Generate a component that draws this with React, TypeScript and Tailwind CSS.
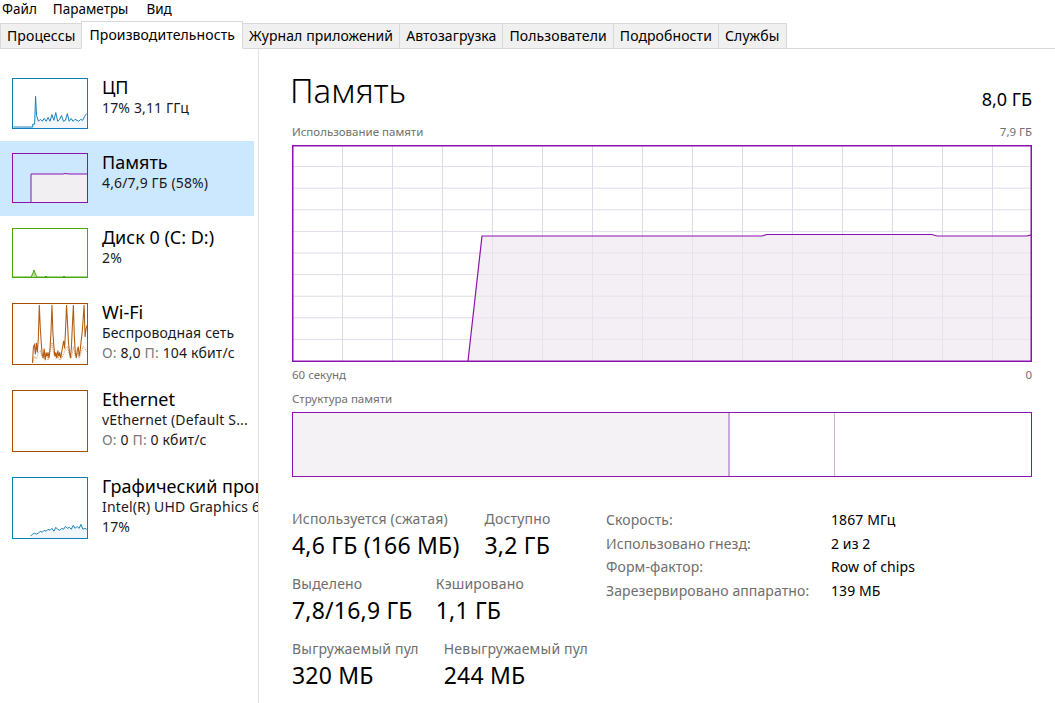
import React from "react";

const F = "font-['Noto_Sans',sans-serif]";

function CpuThumb() {
  const pts = [
    [0, 50], [20, 50], [20, 47], [22, 47], [23, 18], [24, 38], [26, 44], [28, 42], [30, 44], [32, 41], [34, 44], [36, 40], [38, 44], [40, 37], [42, 43], [44, 35], [46, 44], [48, 42], [50, 38], [52, 44], [54, 43], [56, 36], [58, 44], [60, 41], [62, 44], [64, 42], [66, 43], [68, 44], [70, 42], [72, 43], [74, 39], [76, 36],
  ];
  const line = pts.map((p) => p.join(",")).join(" ");
  return (
    <svg width="76" height="51" className="block border border-[#117dbb]" viewBox="0 0 76 51">
      <polygon points={line + " 76,51 20,51"} fill="#f1f6fa" />
      <polyline points={line} fill="none" stroke="#117dbb" strokeWidth="1" />
    </svg>
  );
}

function MemThumb() {
  return (
    <svg width="76" height="50" className="block border border-[#8b12ae]" viewBox="0 0 74 48">
      <polygon points="18,48 18,20 50,20 52,19.5 56,20 74,20 74,48" fill="#f1eff2" />
      <polyline points="18,48 18,20 50,20 52,19.5 56,20 74,20" fill="none" stroke="#8b12ae" strokeWidth="1" />
    </svg>
  );
}

function DiskThumb() {
  return (
    <svg width="76" height="50" className="block border border-[#4da60c]" viewBox="0 0 74 48">
      <polygon points="18,48 20,44 21,41 22,44 24,48" fill="#b7de9a" />
      <polyline points="0,48 18,48 20,44 21,41 22,44 24,48 32,48 33,47 34,48 50,48 51,47 52,48 74,48" fill="none" stroke="#4da60c" strokeWidth="1" />
    </svg>
  );
}

function WifiThumb() {
  const a =
    "20,61 21,44 22,42 23,52 24,40 25,50 26,36 27,1 28,24 29,40 30,52 31,56 32,46 33,58 34,50 35,54 36,50 37,56 38,46 39,30 40,1 41,30 42,44 43,54 44,50 45,56 46,48 47,54 48,50 49,56 50,50 51,44 52,38 53,46 54,26 55,1 56,20 57,40 58,50 59,56 60,44 61,22 62,1 63,34 64,50 65,56 66,48 67,44 68,54 69,48 70,38 71,30 72,16 73,1 74,34 75,26 76,22";
  const b =
    "20,61 22,54 24,57 26,50 28,48 30,55 32,56 34,52 36,58 38,50 40,40 42,52 44,56 46,54 48,58 50,56 52,52 54,46 56,44 58,52 60,56 62,44 64,54 66,50 68,56 70,50 72,44 74,46 76,50";
  return (
    <svg width="76" height="62" className="block border border-[#a74f01]" viewBox="0 0 76 62" preserveAspectRatio="none">
      <polyline points={b} fill="none" stroke="#d08a50" strokeWidth="1" strokeDasharray="1 1" />
      <polyline points={a} fill="none" stroke="#b25d12" strokeWidth="1.1" />
    </svg>
  );
}

function EthThumb() {
  return <div className="w-[76px] h-[62px] border border-[#a74f01]" />;
}

function GpuThumb() {
  const line =
    "18,60 20,58 22,57 24,58 26,57 28,55 30,56 32,54 34,55 36,53 38,54 40,52 42,55 44,51 46,53 48,54 50,52 52,53 54,50 56,52 58,51 60,53 62,49 64,52 66,50 68,52 70,48 72,53 74,52 76,53";
  return (
    <svg width="76" height="62" className="block border border-[#117dbb]" viewBox="0 0 76 62">
      <polygon points={line + " 76,62 18,62"} fill="#f1f6fa" />
      <polyline points={line} fill="none" stroke="#117dbb" strokeWidth="1" />
    </svg>
  );
}

function SideItem({
  thumb,
  title,
  lines,
  selected,
  tall,
}: {
  thumb: React.ReactNode;
  title: string;
  lines: React.ReactNode[];
  selected?: boolean;
  tall?: boolean;
}) {
  return (
    <div
      className={`flex w-[254px] pl-[12px] pt-[12px] ${tall ? "h-[87px]" : "h-[75px]"} ${selected ? "bg-[#cce8ff]" : ""}`}
    >
      <div className="shrink-0">{thumb}</div>
      <div className="ml-[14px] min-w-0 whitespace-nowrap">
        <div className="text-[18px] leading-[22px] mt-[-2px] text-black">{title}</div>
        {lines.map((l, i) => (
          <div key={i} className="text-[14px] leading-[20px] tracking-[0.15px] text-[#1a1a1a]">
            {l}
          </div>
        ))}
      </div>
    </div>
  );
}

function MemChart() {
  const v = [] as number[];
  for (let k = 1; k <= 14; k++) v.push(50 * k + 0.5);
  const h = [] as number[];
  for (let k = 1; k <= 9; k++) h.push(21.6 * k);
  const pts = "176,216 190,91 470,91 475,89.5 640,89.5 645,91 735,91 740,89.5";
  return (
    <svg width="740" height="217" viewBox="0 0 740 217" className="block">
      {v.map((x) => (
        <line key={"v" + x} x1={x} y1="0" x2={x} y2="217" stroke="#e3dae8" strokeWidth="1" />
      ))}
      {h.map((y) => (
        <line key={"h" + y} x1="0" y1={y} x2="740" y2={y} stroke="#e3dae8" strokeWidth="1" />
      ))}
      <polygon points={pts + " 740,217 176,217"} fill="#ece6ef" fillOpacity="0.65" />
      <polyline points={pts} fill="none" stroke="#8b12ae" strokeWidth="1.2" />
      <rect x="0.75" y="0.75" width="738.5" height="215.5" fill="none" stroke="#8b12ae" strokeWidth="1.5" />
    </svg>
  );
}

function Stat({ label, value }: { label: string; value: string }) {
  return (
    <div className="flex flex-col whitespace-nowrap">
      <div className="text-[14px] leading-[20px] tracking-[0.2px] text-[#6e6e6e]">{label}</div>
      <div className="text-[23px] leading-[30px] tracking-[0.2px] text-black mt-[1px]">{value}</div>
    </div>
  );
}

export default function App() {
  const tabs = [
    "Процессы",
    "Производительность",
    "Журнал приложений",
    "Автозагрузка",
    "Пользователи",
    "Подробности",
    "Службы",
  ];
  const gray = (s: string) => <span className="text-[#7a7a7a]">{s}</span>;
  return (
    <div className={`w-[1055px] h-[703px] bg-white overflow-hidden text-black ${F}`}>
      {/* menu */}
      <div className="h-[18px] flex items-center text-[13.5px] leading-[18px] pl-[2px]">
        <span>Файл</span>
        <span className="ml-[16px]">Параметры</span>
        <span className="ml-[18px]">Вид</span>
      </div>
      {/* tabs */}
      <div className="h-[31px] flex items-end border-b border-[#d9d9d9] pl-0">
        {tabs.map((t, i) =>
          i === 1 ? (
            <div
              key={t}
              className="relative z-10 h-[28px] -ml-px mb-[-1px] px-[7px] pt-[2px] bg-white border border-[#d9d9d9] border-b-white text-[14px] leading-[22px] tracking-[0.1px] whitespace-nowrap"
            >
              {t}
            </div>
          ) : (
            <div
              key={t}
              className={`h-[25px] ${i === 0 ? "" : "-ml-px"} px-[6px] bg-[#f0f0f0] border border-b-0 border-[#d9d9d9] text-[14px] leading-[24px] tracking-[0.1px] whitespace-nowrap`}
            >
              {t}
            </div>
          )
        )}
      </div>
      {/* body */}
      <div className="flex h-[654px]">
        <div className="w-[259px] shrink-0 border-r border-[#e1e1e1] overflow-hidden pt-[17px]">
          <SideItem thumb={<CpuThumb />} title="ЦП" lines={["17%  3,11 ГГц"]} />
          <SideItem thumb={<MemThumb />} title="Память" lines={["4,6/7,9 ГБ (58%)"]} selected />
          <SideItem thumb={<DiskThumb />} title="Диск 0 (C: D:)" lines={["2%"]} />
          <SideItem
            thumb={<WifiThumb />}
            title="Wi-Fi"
            lines={["Беспроводная сеть", <>{gray("О:")} 8,0 {gray("П:")} 104 кбит/с</>]}
            tall
          />
          <SideItem
            thumb={<EthThumb />}
            title="Ethernet"
            lines={["vEthernet (Default S...", <>{gray("О:")} 0 {gray("П:")} 0 кбит/с</>]}
            tall
          />
          <SideItem
            thumb={<GpuThumb />}
            title="Графический процессор 0"
            lines={["Intel(R) UHD Graphics 620", "17%"]}
            tall
          />
        </div>
        <div className="flex-1 pl-[33px] pr-[23px]">
          <div className="flex items-end justify-between h-[65px]">
            <div className="text-[33px] leading-[44px] font-light mb-[1px] ml-[-2px]">Память</div>
            <div className="text-[18px] leading-[24px] mb-[3px]">8,0 ГБ</div>
          </div>
          <div className="flex justify-between text-[11.5px] leading-[16px] text-[#707070] mt-[10px]">
            <span>Использование памяти</span>
            <span>7,9 ГБ</span>
          </div>
          <div className="mt-[5px]">
            <MemChart />
          </div>
          <div className="flex justify-between text-[11.5px] leading-[16px] text-[#707070] mt-[5px]">
            <span>60 секунд</span>
            <span>0</span>
          </div>
          <div className="text-[11.5px] leading-[16px] text-[#707070] mt-[8px]">Структура памяти</div>
          <div className="mt-[5px] h-[65px] flex border-[1.5px] border-[#8b12ae]">
            <div className="w-[437px] bg-[#f4f2f5] border-r-2 border-[#c9aad8]" />
            <div className="w-[105px] border-r border-[#c9b4d3]" />
            <div className="flex-1" />
          </div>
          <div className="flex items-start mt-[32px]">
            <div className="w-[314px] flex flex-col gap-[14px]">
              <div className="flex gap-[25px]">
                <Stat label="Используется (сжатая)" value="4,6 ГБ (166 МБ)" />
                <Stat label="Доступно" value="3,2 ГБ" />
              </div>
              <div className="flex gap-[23px]">
                <Stat label="Выделено" value="7,8/16,9 ГБ" />
                <Stat label="Кэшировано" value="1,1 ГБ" />
              </div>
              <div className="flex gap-[25px]">
                <Stat label="Выгружаемый пул" value="320 МБ" />
                <Stat label="Невыгружаемый пул" value="244 МБ" />
              </div>
            </div>
            <div className="grid grid-cols-[225px_auto] content-start text-[14px] leading-[23.5px] tracking-[0.1px] mt-[-1px]">
              <span className="text-[#6e6e6e]">Скорость:</span>
              <span>1867 МГц</span>
              <span className="text-[#6e6e6e]">Использовано гнезд:</span>
              <span>2 из 2</span>
              <span className="text-[#6e6e6e]">Форм-фактор:</span>
              <span>Row of chips</span>
              <span className="text-[#6e6e6e]">Зарезервировано аппаратно:</span>
              <span>139 МБ</span>
            </div>
          </div>
        </div>
      </div>
    </div>
  );
}
